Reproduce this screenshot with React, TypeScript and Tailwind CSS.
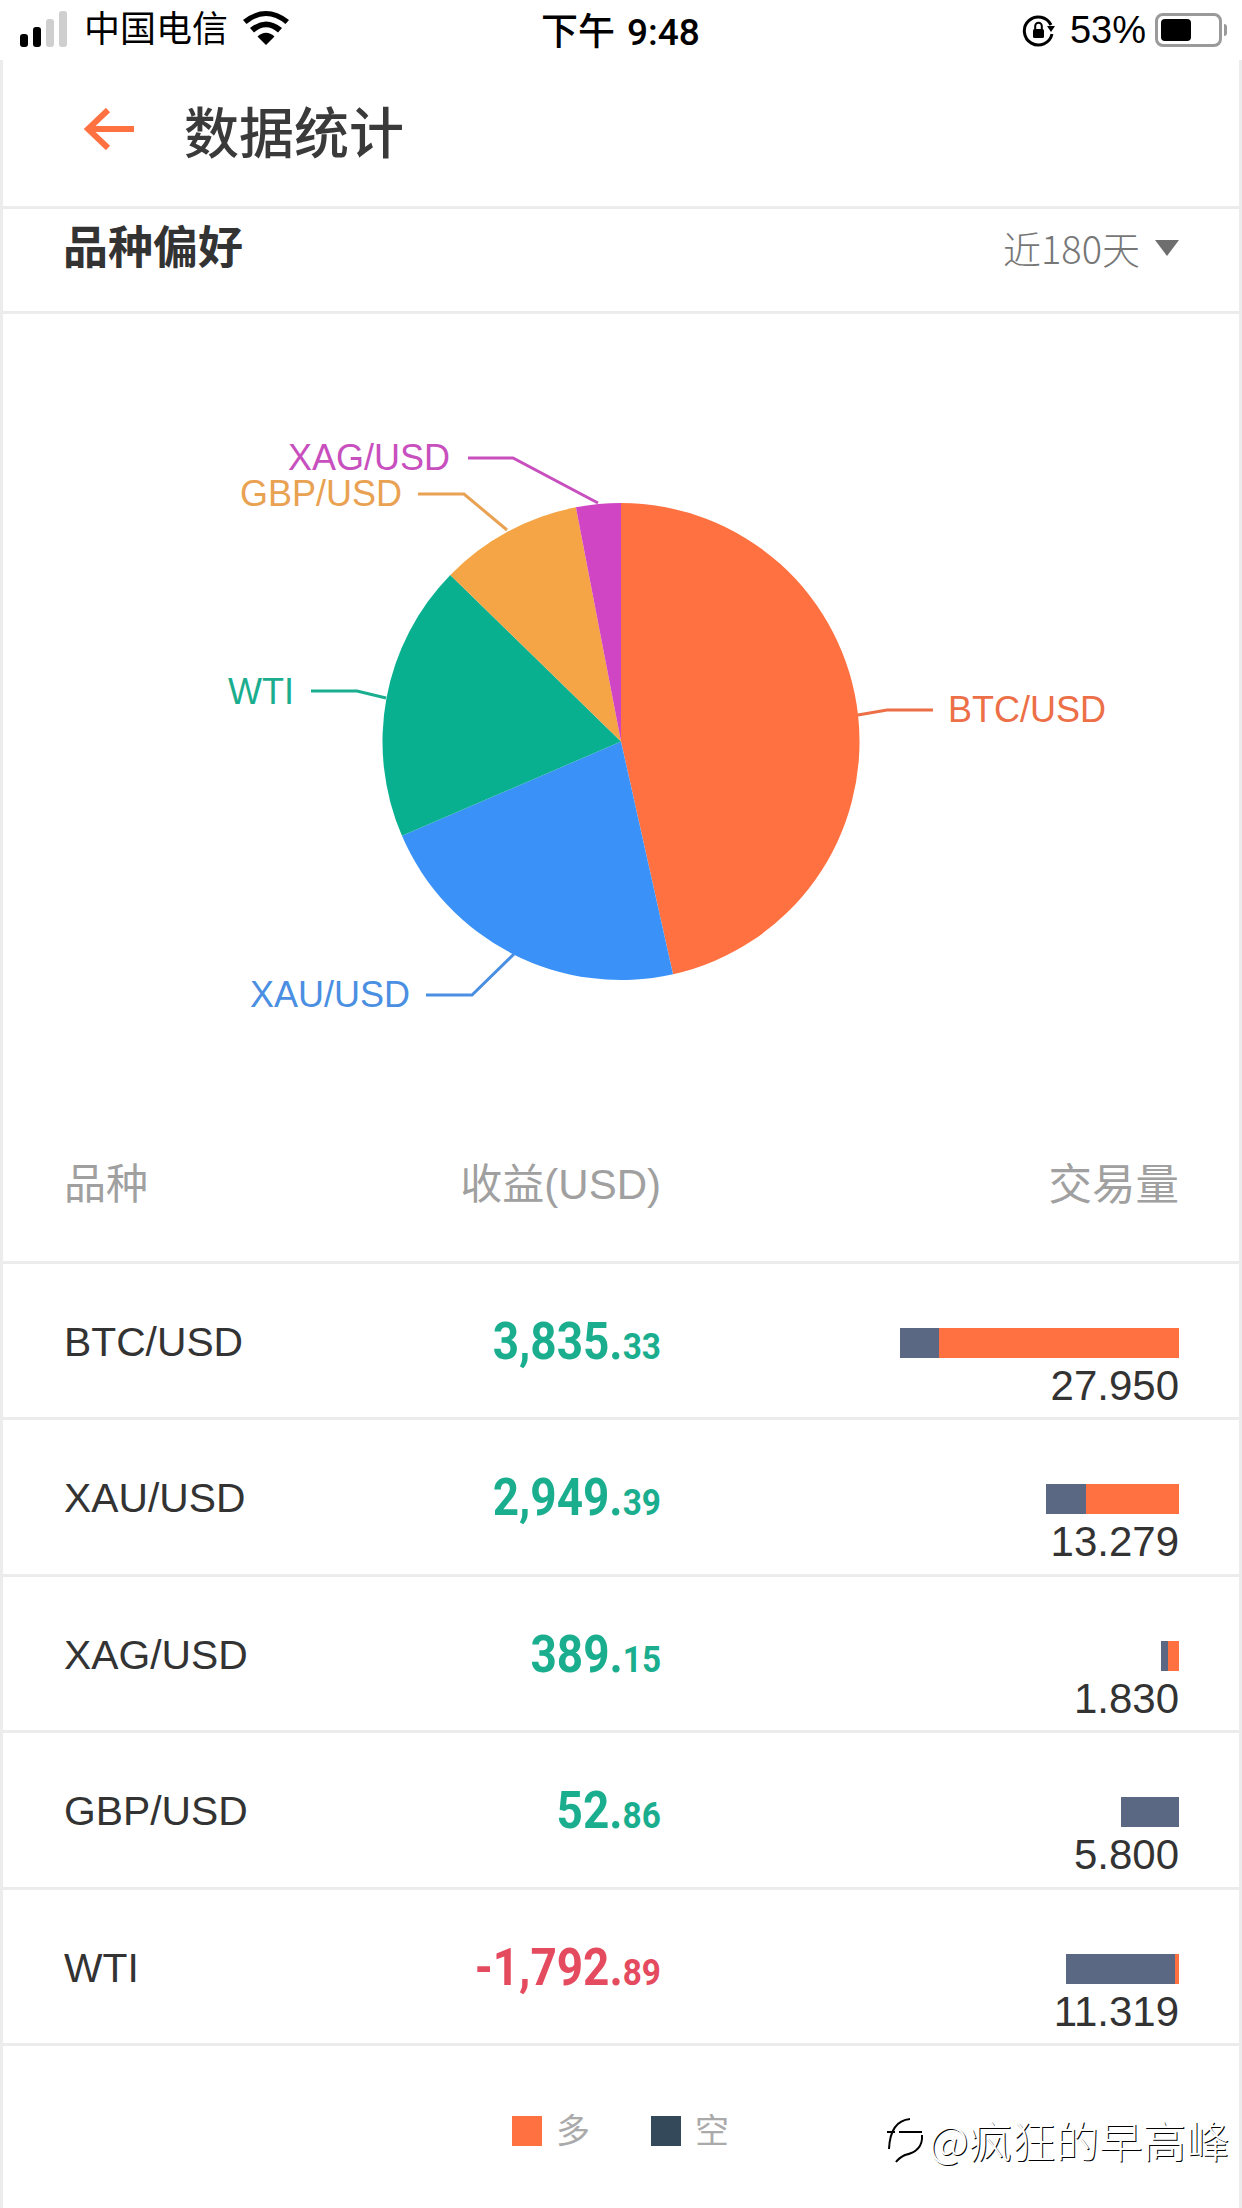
import React from "react";

const sans = "font-['Liberation_Sans','Noto_Sans_CJK_SC',sans-serif]";

const cx = 621, cy = 741.5, r = 238.5;
const slices = [
  { a: 0, b: 167.4, c: "#FF7140" },
  { a: 167.4, b: 246.7, c: "#3A92F8" },
  { a: 246.7, b: 314.3, c: "#08B08F" },
  { a: 314.3, b: 349.1, c: "#F5A545" },
  { a: 349.1, b: 360, c: "#CF45C4" },
];
const pt = (deg: number) => {
  const t = (deg * Math.PI) / 180;
  return `${(cx + r * Math.sin(t)).toFixed(2)} ${(cy - r * Math.cos(t)).toFixed(2)}`;
};

const labels = [
  { t: "XAG/USD", x: 450, y: 457, c: "#C84FBE", pts: "468,458 513,458 598,503", anchor: "end" },
  { t: "GBP/USD", x: 402, y: 493, c: "#E9A252", pts: "418,494 464,494 507,530", anchor: "end" },
  { t: "WTI", x: 294, y: 691, c: "#1AAE8F", pts: "311,691 357,691 386,698", anchor: "end" },
  { t: "XAU/USD", x: 410, y: 994, c: "#4A8FE2", pts: "426,995 472,995 514,954", anchor: "end" },
  { t: "BTC/USD", x: 948, y: 709, c: "#EC6F47", pts: "858,715 887,710 933,710", anchor: "start" },
];

const rows = [
  { n: "BTC/USD", i: "3,835.", d: "33", v: "27.950", s: 39, l: 240, c: "text-[#1AAE8F]" },
  { n: "XAU/USD", i: "2,949.", d: "39", v: "13.279", s: 40, l: 93, c: "text-[#1AAE8F]" },
  { n: "XAG/USD", i: "389.", d: "15", v: "1.830", s: 7, l: 11, c: "text-[#1AAE8F]" },
  { n: "GBP/USD", i: "52.", d: "86", v: "5.800", s: 58, l: 0, c: "text-[#1AAE8F]" },
  { n: "WTI", i: "-1,792.", d: "89", v: "11.319", s: 109, l: 4, c: "text-[#E54B5F]" },
];

function StatusBar() {
  return (
    <div className={`h-[60px] flex items-center relative text-black ${sans}`}>
      <div className="flex items-end gap-[5px] ml-[20px] h-[38px] pb-[2px]">
        <div className="w-[8px] h-[13px] rounded-[3px] bg-black" />
        <div className="w-[8px] h-[20px] rounded-[3px] bg-black" />
        <div className="w-[8px] h-[28px] rounded-[3px] bg-[#cfcfcf]" />
        <div className="w-[8px] h-[36px] rounded-[3px] bg-[#cfcfcf]" />
      </div>
      <span className="ml-[17px] text-[36px] leading-none">中国电信</span>
      <svg className="ml-[15px] mb-[4px]" width="46" height="34" viewBox="0 0 46 34">
        <path d="M0 9 Q23 -9 46 9 L42.5 13 Q23 -3 3.5 13 Z M7 17 Q23 4 39 17 L35 21.5 Q23 11 11 21.5 Z M14.5 25.5 Q23 18 31.5 25.5 L23 34 Z" fill="#000" />
      </svg>
      <div className="absolute left-[541px] top-[9px] text-[37px] leading-[40px] whitespace-nowrap">
        <span className="font-['Noto_Sans_CJK_SC',sans-serif] font-medium">下午</span>
        <span className="ml-[12px] font-['Roboto',sans-serif] font-medium">9:48</span>
      </div>
      <div className="ml-auto flex items-center mr-[15px]">
        <svg width="34" height="34" viewBox="0 0 34 34" fill="none">
          <path d="M29 12 A14 14 0 1 0 30 21" stroke="#000" strokeWidth="3" />
          <path d="M25 13 L33 13 L29 19 Z" fill="#000" />
          <rect x="11" y="16" width="11" height="9" rx="1.5" fill="#000" />
          <path d="M13.2 16 V13 a3.3 3.3 0 0 1 6.6 0 V16" stroke="#000" strokeWidth="2" />
        </svg>
        <span className="ml-[14px] text-[38px] leading-none">53%</span>
        <div className="ml-[9px] w-[67px] h-[34px] rounded-[8px] border-[3px] border-[#9a9a9a] p-[3px]">
          <div className="w-[30px] h-full rounded-[4px] bg-black" />
        </div>
        <div className="ml-[2px] w-[3px] h-[12px] rounded-r-[3px] bg-[#9a9a9a]" />
      </div>
    </div>
  );
}

function Chart() {
  return (
    <svg width="1236" height="800" viewBox="3 314 1236 800" className={`block ${sans}`}>
      {slices.map((s) => (
        <path
          key={s.c}
          d={`M${cx} ${cy} L${pt(s.a)} A${r} ${r} 0 0 1 ${pt(s.b)} Z`}
          fill={s.c}
        />
      ))}
      {labels.map((l) => (
        <g key={l.t}>
          <polyline points={l.pts} fill="none" stroke={l.c} strokeWidth="3" />
          <text
            x={l.x}
            y={l.y + 12.5}
            fontSize="36"
            fill={l.c}
            textAnchor={l.anchor as "end" | "start"}
          >
            {l.t}
          </text>
        </g>
      ))}
    </svg>
  );
}

function Row({ r }: { r: (typeof rows)[number] }) {
  return (
    <div className="h-[156.4px] flex border-b-[3px] border-[#ececec] pl-[61px] pr-[60px]">
      <div className="w-[300px] pt-[54px] text-[40.8px] leading-[48px] text-[#333]">{r.n}</div>
      <div className="w-[297px] pt-[50px] flex justify-end">
        <div className={`origin-right scale-x-[0.9] font-['Roboto',sans-serif] font-bold whitespace-nowrap leading-[56px] ${r.c}`}>
          <span className="text-[51px]">{r.i}</span>
          <span className="text-[37px]">{r.d}</span>
        </div>
      </div>
      <div className="flex-1 flex flex-col items-end pt-[64px]">
        <div className="flex h-[30px]">
          <div className="bg-[#5A6883] h-full" style={{ width: r.s }} />
          <div className="bg-[#FF7140] h-full" style={{ width: r.l }} />
        </div>
        <div className="text-[42px] leading-[48px] text-[#333] mt-[4px]">{r.v}</div>
      </div>
    </div>
  );
}

export default function App() {
  return (
    <div className={`w-[1242px] h-[2208px] overflow-hidden bg-white flex flex-col ${sans}`}>
      <StatusBar />
      <div className="flex-1 border-x-[3px] border-[#ececec] flex flex-col relative">
        <div className="h-[149px] flex items-center border-b-[3px] border-[#ececec] pl-[81px] pb-[8px]">
          <svg width="50" height="42" viewBox="0 0 50 42" fill="none" stroke="#FF7140" strokeWidth="6">
            <path d="M50 21 H4" />
            <path d="M24 2 L4 21 L24 40" />
          </svg>
          <span className="ml-[50px] text-[55px] leading-none font-medium text-[#3a3a3a] font-['Noto_Sans_CJK_SC',sans-serif]">数据统计</span>
        </div>
        <div className="h-[105px] flex items-start justify-between border-b-[3px] border-[#ececec] pl-[60px] pr-[60px] pt-[11px]">
          <span className="text-[45px] leading-[50px] font-bold text-[#333] font-['Noto_Sans_CJK_SC',sans-serif]">品种偏好</span>
          <div className="flex items-center h-[52px] mt-[2px] text-[#777]">
            <span className="text-[38px] leading-none font-['Noto_Sans_CJK_SC',sans-serif] font-light">近180天</span>
            <div className="ml-[15px] w-0 h-0 border-x-[12px] border-x-transparent border-t-[16px] border-t-[#6e6e6e]" />
          </div>
        </div>
        <Chart />
        <div className="h-[150px] flex border-b-[3px] border-[#ececec] pl-[61px] pr-[60px] pt-[46px] text-[42px] leading-[50px] text-[#a0a0a0]">
          <span className="w-[300px]">品种</span>
          <span className="w-[297px] text-right">收益(USD)</span>
          <span className="flex-1 text-right text-[43.5px]">交易量</span>
        </div>
        {rows.map((r) => (
          <Row key={r.n} r={r} />
        ))}
        <div className="flex pl-[509px] pt-[68px] items-center">
          <div className="w-[30px] h-[30px] bg-[#FF7140]" />
          <span className="ml-[14px] text-[34px] leading-none text-[#aaa]">多</span>
          <div className="ml-[61px] w-[30px] h-[30px] bg-[#34495A]" />
          <span className="ml-[14px] text-[34px] leading-none text-[#aaa]">空</span>
        </div>
        <div className="absolute left-[884px] top-[2055px] h-[50px] flex items-center text-white [text-shadow:1px_1px_0_#000]">
          <svg width="37" height="46" viewBox="0 0 37 46" fill="none" stroke="#000" strokeWidth="2">
            <path d="M23 2 C12 3 3 10 2 32" />
            <path d="M0 15 H8 M12 15 H35" />
            <path d="M35 18 C36 30 28 36 18 38 C14 40 11 42 9 45" />
          </svg>
          <span className="text-[43.5px] leading-[50px] ml-[5px] whitespace-nowrap font-['Noto_Sans_CJK_SC',sans-serif] font-light">@疯狂的早高峰</span>
        </div>
      </div>
    </div>
  );
}
